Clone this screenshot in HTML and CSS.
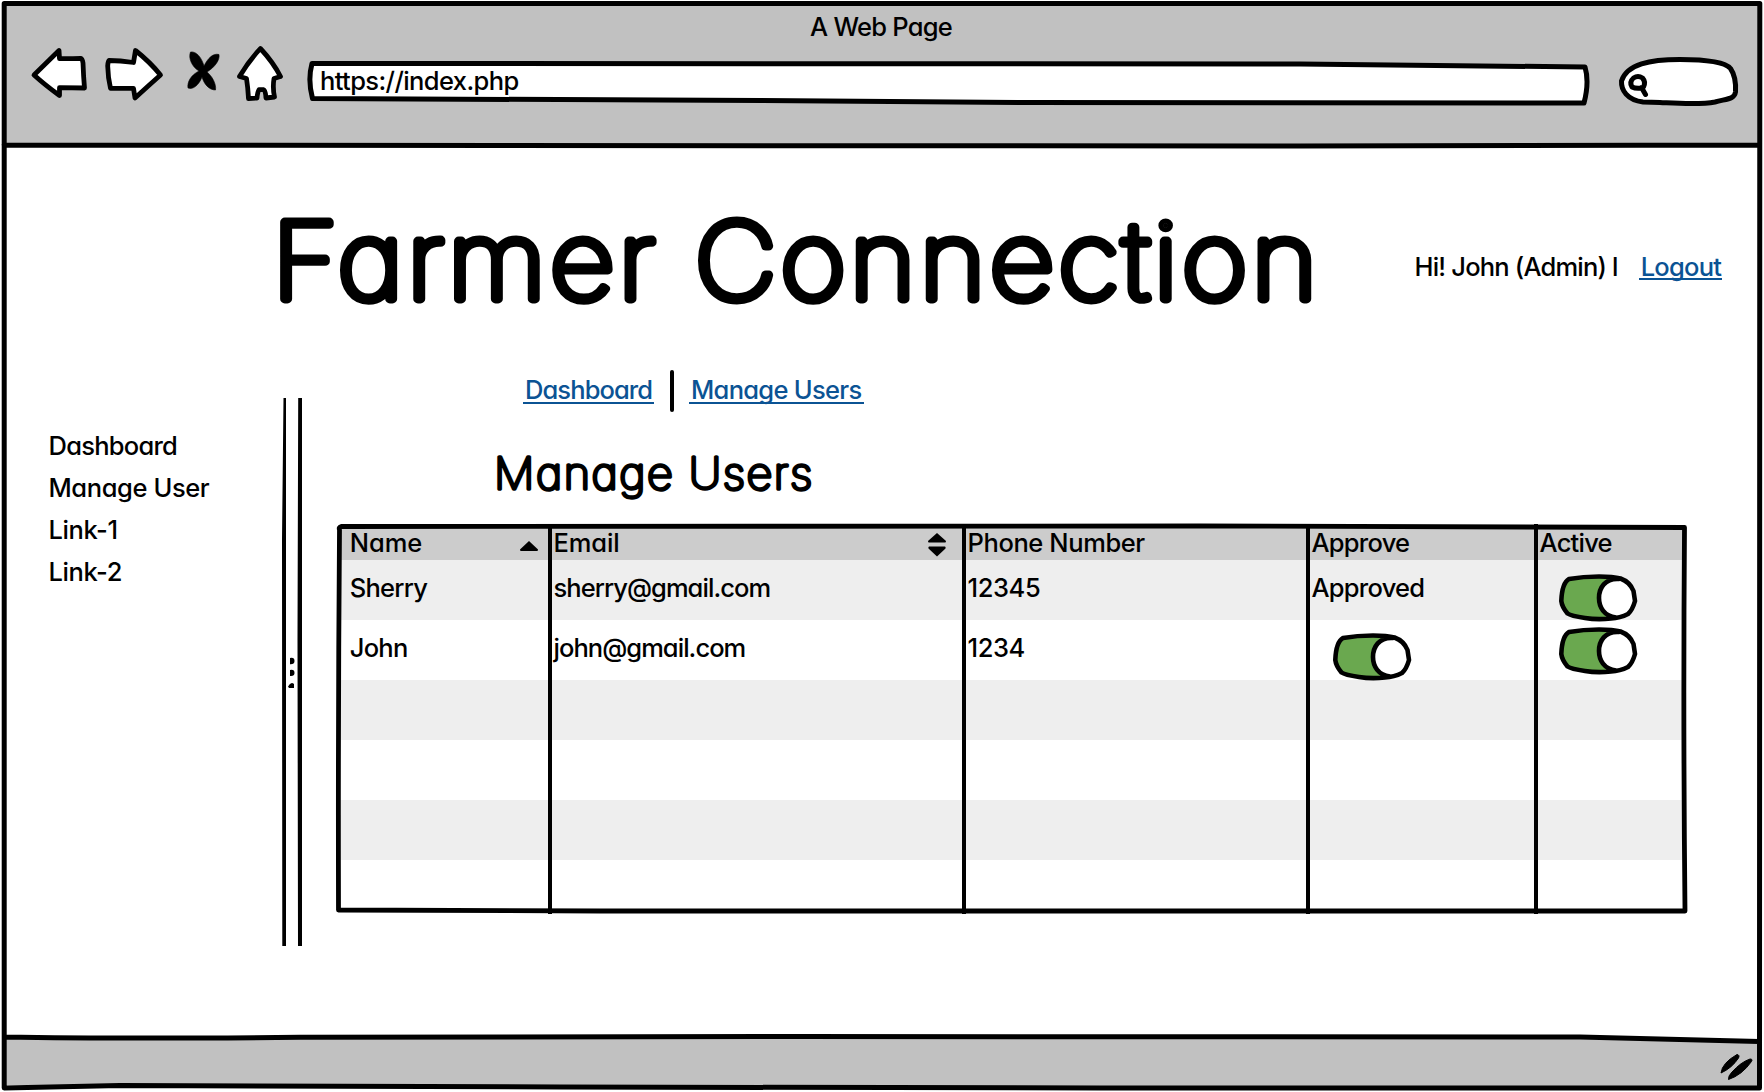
FILE: index.html
```html
<!DOCTYPE html>
<html lang="en">
<head>
<meta charset="utf-8">
<title>A Web Page</title>
<link rel="stylesheet" href="styles.css">
</head>
<body>
<svg class="symbols" width="0" height="0">
  <symbol id="toggle" viewBox="0 0 80 48">
    <path d="M10 5Q24 2.500 40 2.500Q54 2.500 61.500 4.500Q71 8 74.500 17L76 27Q73.500 36 69 40Q61 44 52 44.500Q38 46 26 44Q12 42 8.500 39.500Q3 33 2.300 27Q3 9 10 5Z" fill="#6aa84f"/>
    <path d="M60 4.500Q71 8 74.500 17L76 27Q73.500 36 69 40Q63 43 56 43.500C45 41 40 33 40 24C40 14 46 5 56 4.500Z" fill="#fff"/>
    <path d="M10 5Q24 2.500 40 2.500Q54 2.500 61.500 4.500Q71 8 74.500 17L76 27Q73.500 36 69 40Q61 44 52 44.500Q38 46 26 44Q12 42 8.500 39.500Q3 33 2.300 27Q3 9 10 5ZM60 5C46 4 40 14 40 24C40 33 45 42 57 43.500" class="ink"/>
  </symbol>
</svg>

<header class="chrome">
  <div class="window-title">A Web Page</div>
  <div class="toolbar">
    <svg class="tool back" viewBox="30 46 60 56"><path class="ink fill" d="M34 75L59 50.500L59.500 58.700Q76 58.500 80.500 58.300Q82.500 59 83 63Q83.500 77 84.500 88L59.500 87.700L59.500 95.500Q45 85 34 75Z"/></svg>
    <svg class="tool forward" viewBox="104 46 60 56"><path class="ink fill" d="M109 60.500Q120 60.500 133.500 62.500L135.500 50.500Q150 62 160.500 75Q147 87 135 98L133.500 88.300L110.500 88.300Q108 78 107.700 66Q108 61 109 60.500Z"/></svg>
    <svg class="tool stop" viewBox="186 48 36 46"><path d="M190.500 52C196 51 201.500 57 204 66C208 58 213 53 219 54.500C220 60 215 67 207 72C212 76 216.500 84 215.500 90C209 90 204 84 202 77C199 85 193 90 188 88C187 82 191 75 199 71C192 67 188 58 190.500 52Z"/></svg>
    <svg class="tool home" viewBox="236 44 50 60"><path class="ink fill" d="M260.400 48.500Q273 62 280.500 76.500L274 78.500Q272.500 88 274.500 97L266 98Q265.500 90 263.500 89.700L259 89.700Q257.500 92 257 98L248.500 98.500Q248 88 246.500 78.500L239.500 76.500Q248 62 260.400 48.500Z"/></svg>
    <div class="address">
      <svg viewBox="306 58 1286 50"><path class="ink heavy fill" d="M312 63.500L1300 64L1585 67Q1589.500 82 1584 103L1030 102.500L760 100.500L312.500 98.500Q307.500 80 312 63.500Z"/></svg>
      <span>https://index.php</span>
    </div>
    <svg class="search" viewBox="1616 54 126 56"><path class="ink heavy fill" d="M1643 102C1627 100 1621 90 1621.500 81C1627 64 1650 59.500 1680 59.500C1705 59.500 1725 62 1730.500 68.500C1735 75 1736 84 1735.500 92C1734.500 99 1728 98.500 1715 102C1700 105 1680 103.500 1660 102.500Z"/><path class="ink heavy" d="M1643.500 87Q1646 82 1642.500 78Q1638 75 1633.500 78Q1629 82 1632 87Q1636 89 1642 88ZM1641.500 87.500L1645.500 94.500"/></svg>
  </div>
</header>

<main>
  <div class="masthead">
    <h1><svg viewBox="0 0 1060 150"><text transform="scale(1.07 1)" x="0" y="109" textLength="977" lengthAdjust="spacing">Farmer Connection</text></svg></h1>
    <p class="session"><span>Hi! John (Admin) l</span><a>Logout</a></p>
  </div>
  <div class="columns">
    <nav class="side">
      <a>Dashboard</a>
      <a class="mid">Manage User</a>
      <a class="mid">Link-1</a>
      <a class="mid">Link-2</a>
    </nav>
    <svg class="splitter" viewBox="280 398 24 548"><path d="M283.500 398L286 398L286 946L282.300 946L282 540ZM298.200 398L302 398L302 946L298 946L297.500 640ZM290 658Q294.500 657 294.500 661Q294.500 664.500 290 664.200ZM290 670Q294.500 669 294.500 673Q294.500 676.500 290 676ZM288 686.500Q291 681 294 684L294 688L289 688Z"/></svg>
    <section>
      <p class="crumbs"><a>Dashboard</a><i></i><a>Manage Users</a></p>
      <h2><svg viewBox="0 0 340 60"><text transform="scale(1.05 1)" x="2" y="43" textLength="303" lengthAdjust="spacing">Manage Users</text></svg></h2>
      <div class="table">
        <div class="row head">
          <div class="loose">Name<svg class="sort up" viewBox="0 0 18 24"><path d="M9 8L18 16.500Q18 18 17 18L1 18Q0 18 0 16.500Z"/></svg></div>
          <div class="loose">Email<svg class="sort both" viewBox="0 0 18 24"><path d="M9 0L18 8Q18 9.500 17 9.500L1 9.500Q0 9.500 0 8ZM1 13.500L17 13.500Q18 14 17.500 15.500L9 23.500L.5 15.500Q0 14 1 13.500Z"/></svg></div>
          <div class="mid">Phone Number</div><div>Approve</div><div>Active</div>
        </div>
        <div class="row"><div>Sherry</div><div class="tight">sherry@gmail.com</div><div class="mid">12345</div><div>Approved</div><div><svg class="toggle active-top"><use href="#toggle"/></svg></div></div>
        <div class="row"><div>John</div><div class="tight">john@gmail.com</div><div class="mid">1234</div><div><svg class="toggle approve"><use href="#toggle"/></svg></div><div><svg class="toggle active"><use href="#toggle"/></svg></div></div>
        <div class="row"></div>
        <div class="row"></div>
        <div class="row"></div>
        <div class="row last"></div>
        <svg class="rules" viewBox="334 522 1356 396"><path class="frame" d="M341 526.500L1200 526L1684.500 527.500Q1683 720 1685 911L1000 911L600 911L338.500 910Q338 720 339.500 530Q338.500 527 341 526.500Z"/><path class="lines" d="M550 527V914M964 527V914M1308 524V914M1536 524V914"/></svg>
      </div>
    </section>
  </div>
</main>

<footer>
  <svg viewBox="1716 1050 40 34"><path d="M1721 1073Q1722 1063 1737 1054.500Q1740 1055 1738.500 1058Q1732 1068 1721 1073ZM1728.500 1079.500Q1728 1076 1732 1072Q1741 1062 1750 1059Q1753 1059 1751.500 1061.500Q1742 1075 1728.500 1079.500Z"/></svg>
</footer>

<svg class="window-frame" viewBox="0 0 1764 1092">
  <path class="wash" d="M6 1038L6 1085L1758 1088L1758 1041.500L1580 1037L800 1036.500Z"/>
  <path class="ink border" d="M4.200 3.500L1759.800 3.500Q1759 600 1759.500 1088L1100 1088L560 1087L120 1085.500L4.200 1088Q3.500 500 4.200 3.500ZM4 145L500 145.500L1300 146L1759 145M5 1037Q120 1039 300 1037.300L800 1036.500L1580 1037L1759 1041.500"/>
</svg>
</body>
</html>
```
FILE: styles.css
```css
* { box-sizing: border-box; }

body {
  margin: 0;
  position: relative;
  width: 1764px;
  height: 1092px;
  display: flex;
  flex-direction: column;
  background: #fff;
  color: #000;
  font: 500 25.5px/29px Inter, "Liberation Sans", sans-serif;
  font-feature-settings: "cv11";
  letter-spacing: -.75px;
  overflow: hidden;
}

h1, h2, p { margin: 0; font-weight: inherit; }
svg { display: block; overflow: visible; }
.symbols { position: absolute; }

.ink {
  fill: none;
  stroke: #000;
  stroke-width: 4.6;
  stroke-linejoin: round;
  stroke-linecap: round;
}
.fill { fill: #fff; }
.heavy { stroke-width: 5; }
.tight { letter-spacing: -.95px; }
.mid { letter-spacing: -.4px; }
.loose { letter-spacing: -.1px; }

/* Browser chrome */
.chrome {
  flex: none;
  height: 146px;
  margin: 0 5px;
  padding-top: 12px;
  background: linear-gradient(transparent 4px, #c1c1c1 4px);
}
.window-title { text-align: center; line-height: 29px; padding-right: 2px; }
.toolbar {
  display: flex;
  align-items: flex-start;
  padding: 3px 0 0 25px;
}
.tool { flex: none; }
.tool .ink { stroke-width: 4.8; }
.back { width: 60px; height: 56px; margin-top: 2px; }
.forward { width: 60px; height: 56px; margin: 2px 0 0 14px; }
.stop { width: 36px; height: 46px; margin: 4px 0 0 22px; stroke: #000; stroke-width: .6; }
.home { width: 50px; height: 60px; margin-left: 14px; }
.address {
  position: relative;
  flex: none;
  width: 1286px;
  height: 50px;
  margin: 14px 0 0 20px;
}
.address svg { width: 1286px; height: 50px; }
.address span {
  position: absolute;
  left: 14px;
  top: 8px;
  letter-spacing: -.6px;
}
.search { flex: none; width: 126px; height: 56px; margin: 10px 0 0 24px; }

/* Page */
main { flex: 1; }
.masthead {
  display: flex;
  height: 224px;
  padding: 44px 0 0 272px;
}
h1 svg { width: 1060px; height: 150px; }
h1 text, h2 text {
  font-family: Inter, "Liberation Sans", sans-serif;
  letter-spacing: 0;
  stroke: #000;
  stroke-linejoin: round;
  stroke-linecap: round;
}
h1 text { font-size: 106px; font-weight: 140; stroke-width: 8.8px; }
h2 text { font-size: 43px; font-weight: 140; stroke-width: 3.5px; }
.session {
  display: flex;
  gap: 21px;
  margin: 62px 0 0 82.500px;
  height: 29px;
  white-space: nowrap;
}
.session span { letter-spacing: -.8px; }
.session a, .crumbs a {
  height: 28px;
  padding: 0 2px;
  color: #0b5394;
  border-bottom: 2px solid #0b5394;
}
.session a { width: 83px; }

.columns { display: flex; height: 664px; }
.side {
  width: 280px;
  padding: 61px 0 0 48.500px;
  display: flex;
  flex-direction: column;
  gap: 13px;
}
.splitter { flex: none; width: 24px; height: 548px; margin-top: 28px; }
section { padding-left: 35px; }
.crumbs { display: flex; margin-left: 184px; height: 42px; white-space: nowrap; }
.crumbs a { margin-top: 6px; line-height: 27px; }
.crumbs a:first-child { width: 131px; letter-spacing: -.9px; }
.crumbs a:last-child { width: 175px; letter-spacing: -.7px; }
.crumbs i {
  width: 4px;
  height: 42px;
  margin: 0 15px 0 16px;
  border-radius: 2px;
  background: #000;
}
h2 { height: 115px; padding: 34px 0 0 153px; }
h2 svg { width: 340px; height: 60px; }

.table { position: relative; width: 1346px; }
.row {
  display: grid;
  grid-template-columns: 211px 414px 344px 228px 149px;
  height: 60px;
  padding-top: 13px;
}
.row:nth-child(even) { background: #eee; }
.row > div { display: flex; align-items: flex-start; padding-left: 3.500px; white-space: nowrap; }
.row > div:first-child { padding-left: 10.800px; }
.row.head { height: 33px; padding: 1px 0 0; background: #ccc; }
.row.last { height: 51px; background: #fff; }
.sort { width: 18px; height: 24px; margin: 5px 12px 0 auto; }
.both { margin-right: 18px; }
.toggle { width: 80px; height: 48px; margin-left: 19.500px; }
.active-top { margin-top: 1px; }
.active { margin-top: -6.500px; }
.approve { margin: -.5px 0 0 21.500px; }
.rules {
  position: absolute;
  left: -5px;
  top: -5px;
  width: 1356px;
  height: 396px;
  fill: none;
  stroke: #000;
}
.frame { stroke-width: 4.8; stroke-linejoin: round; }
.lines { stroke-width: 4; }

footer {
  flex: none;
  height: 58px;
  padding: 16px 8px 0 1716px;
  position: relative;
  z-index: 1;
}
footer svg { width: 40px; height: 34px; stroke: #000; }

.window-frame {
  position: absolute;
  inset: 0;
  width: 1764px;
  height: 1092px;
}
.wash { fill: #c1c1c1; }
.border { stroke-width: 5; }
```
